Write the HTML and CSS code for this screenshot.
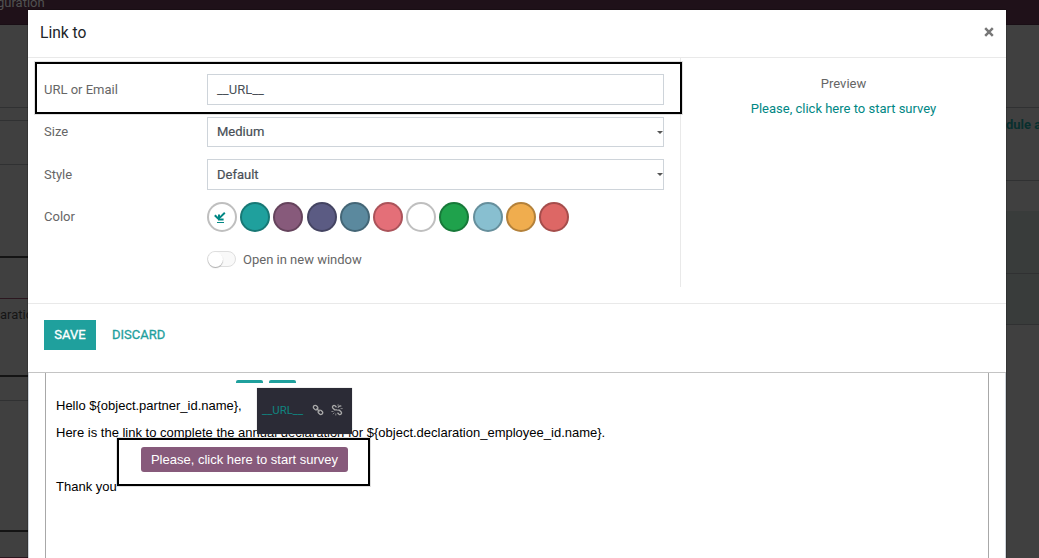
FILE: index.html
```html
<!DOCTYPE html>
<html lang="en">
<head>
<meta charset="utf-8">
<title>Link to</title>
<link rel="stylesheet" href="styles.css">
</head>
<body>
<header class="navbar">guration</header>
<main class="backdrop">
  <div class="strip">
    <div class="seg s83"></div><div class="seg s13"></div><div class="seg s44"></div>
    <div class="seg thick s93"></div><div class="seg red s41"></div>
    <div class="seg thick s78 cell">aration</div><div class="seg s24"></div>
    <div class="seg thick s131"></div><div class="seg red s26"></div>
  </div>
  <div class="strip right">
    <div class="seg s83"></div><div class="seg schedule">dule a</div>
    <div class="seg plain s30"></div><div class="seg tint s63"></div><div class="seg tint s51"></div>
  </div>
</main>
<div class="workspace">
  <section class="modal">
    <div class="modal-header"><h1>Link to</h1>
      <button class="close" aria-label="Close"><svg width="10" height="10" viewBox="0 0 10 10"><path d="M1.2 1.2 8.8 8.8M8.8 1.2 1.2 8.8"/></svg></button>
    </div>
    <div class="modal-body">
      <form class="fields">
        <div class="field"><label>URL or Email</label><div class="control url">__URL__</div></div>
        <div class="field size"><label>Size</label><div class="control select">Medium<svg class="caret" width="6" height="3" viewBox="0 0 6 3"><path d="M0 0h6L3 3z"/></svg></div></div>
        <div class="field style"><label>Style</label><div class="control select">Default<svg class="caret" width="6" height="3" viewBox="0 0 6 3"><path d="M0 0h6L3 3z"/></svg></div></div>
        <div class="field colors"><label>Color</label>
          <div class="swatches">
            <span class="swatch white"><svg width="12" height="13" viewBox="0 0 12 13"><path class="arrow" d="M10.8 1.8 5.8 6.6M.8 4.2 4.4 7.8M5 3.6V8.5H9.6"/><path class="line" d="M3 11.5h7"/></svg></span>
            <span class="swatch teal"></span><span class="swatch purple"></span><span class="swatch indigo"></span><span class="swatch steel"></span><span class="swatch pink"></span><span class="swatch white"></span><span class="swatch green"></span><span class="swatch sky"></span><span class="swatch orange"></span><span class="swatch red-color"></span>
          </div>
        </div>
        <div class="toggle-row"><span class="toggle"></span><span class="toggle-label">Open in new window</span></div>
      </form>
      <aside class="preview"><div>Preview</div><a>Please, click here to start survey</a></aside>
    </div>
    <footer class="modal-footer"><button class="save">SAVE</button><button class="discard">DISCARD</button></footer>
  </section>
  <section class="editor">
    <div class="editor-frame">
      <div class="tabs"><i></i><i></i></div>
      <p>Hello ${object.partner_id.name},</p>
      <p>Here is the link to complete the annual declaration for ${object.declaration_employee_id.name}.</p>
      <a class="survey">Please, click here to start survey</a>
      <p>Thank you</p>
    </div>
  </section>
</div>
<div class="link-popover"><span>__URL__</span>
  <svg class="chain" width="12" height="12" viewBox="0 0 12 12"><rect x="1.2" y="1.8" width="4.8" height="3.6" rx="1.7" transform="rotate(45 3.6 3.6)"/><rect x="6" y="6.5" width="4.8" height="3.6" rx="1.7" transform="rotate(45 8.4 8.3)"/><path d="m4.5 4.5 3 3"/></svg>
  <svg class="unlink" width="12" height="12" viewBox="0 0 12 12"><path d="M5.5 3.3 4 1.8Q2.9 1 1.9 2T1.8 4L3.6 5.8H6M6.5 8.7 8 10.2Q9.1 11 10.1 10T10.2 8L8.4 6.2H6.2M6.8 3.6 8 2.4Q9.3 1.3 10.3 2.4"/><path class="rays" d="M7.1.2v1.8M9.5 4.6h2.2M.4 7.5h2.1M3.4 8.7 1.9 10.2M4.8 9.5v2"/></svg>
</div>
<div class="highlight url-highlight"></div>
<div class="highlight survey-highlight"></div>
</body>
</html>
```
FILE: styles.css
```css
* { box-sizing: border-box; }
body { margin: 0; width: 1039px; height: 558px; overflow: hidden; position: relative; font: 13px/18px Roboto, sans-serif; color: #666; background: #404040; }
button { font: inherit; border: 0; margin: 0; padding: 0; background: none; }
.navbar { height: 25px; background: #1f1119; border-bottom: 1px solid #190e15; color: #515151; line-height: 5px; text-indent: -3px; overflow: hidden; }
.backdrop { display: flex; justify-content: space-between; height: 533px; }
.strip { width: 28px; overflow: hidden; color: #151515; }
.strip.right { width: 33px; }
.seg { border-bottom: 1px solid #303132; white-space: nowrap; }
.seg.thick { border-bottom: 2px solid #141414; }
.seg.red { border-bottom-color: #2b171f; }
.seg.plain { border: 0; }
.seg.tint { background: #393c3b; }
.s83 { height: 83px; } .s13 { height: 13px; } .s44 { height: 44px; } .s93 { height: 93px; } .s41 { height: 41px; } .s78 { height: 78px; } .s24 { height: 24px; } .s131 { height: 131px; } .s26 { height: 26px; } .s30 { height: 30px; } .s63 { height: 63px; } .s51 { height: 51px; }
.cell { padding-top: 7px; }
.schedule { height: 73px; padding-top: 8px; color: #082f2e; font-weight: 700; }
.workspace { position: absolute; left: 28px; top: 10px; width: 978px; height: 548px; display: flex; flex-direction: column; background: #fff; box-shadow: 0 0 1px #000; }
.modal { height: 363px; border-bottom: 1px solid #c4c4c4; display: flex; flex-direction: column; }
.modal-header { height: 48px; padding: 0 12px; border-bottom: 1px solid #e9e9e9; display: flex; justify-content: space-between; align-items: center; }
.modal-header h1 { margin: 0 0 1px; font-size: 15.6px; line-height: 20px; font-weight: 400; color: #212529; }
.close { height: 10px; margin-bottom: 4px; display: flex; }
.close path { stroke: #777; stroke-width: 2.5; }
.modal-body { height: 246px; border-bottom: 1px solid #e9e9e9; padding-left: 16px; display: flex; }
.fields { width: 637px; height: 229px; padding-top: 16px; border-right: 1px solid #e9e9e9; }
.field { display: flex; align-items: center; height: 31px; }
.field label { width: 163px; }
.field.size { height: 30px; margin-top: 12px; }
.field.style { margin-top: 12px; }
.field.colors { height: 30px; margin-top: 12px; }
.control { width: 457px; height: 100%; border: 1px solid #ced4da; padding: 0 0 0 9px; display: flex; align-items: center; justify-content: space-between; color: #495057; }
.select { -webkit-text-stroke: .2px #495057; }
.caret { fill: #555; }
.swatches { display: flex; gap: 3.2px; }
.swatch { width: 30px; height: 30px; flex: none; border: 2px solid rgba(0,0,0,.25); border-radius: 50%; display: flex; align-items: center; justify-content: center; }
.white { background: #fff; } .teal { background: #1fa09d; } .purple { background: #875a7b; } .indigo { background: #5b5b83; } .steel { background: #5b899e; } .pink { background: #e46f78; } .green { background: #1fa24c; } .sky { background: #88bfd0; } .orange { background: #f0ad4e; } .red-color { background: #dd6765; }
.swatch svg { fill: none; stroke: #008784; margin: 0 4px 0 0; }
.arrow { stroke-width: 2; } .line { stroke-width: 1; }
.toggle-row { display: flex; align-items: center; gap: 7px; margin: 18px 0 0 163px; }
.toggle-label { padding-top: 1px; margin-bottom: -1px; }
.toggle { width: 29px; height: 16px; border: 1px solid #dedede; background: #f9f9f9; border-radius: 8px; }
.toggle::before { content: ""; display: block; width: 15px; height: 15px; background: #fff; border-radius: 50%; box-shadow: 0 1px 1px #aaa; }
.preview { flex: 1; padding: 16px 0 0; text-align: center; line-height: 20px; }
.preview a { display: block; margin-top: 5px; color: #008784; }
.modal-footer { height: 68px; padding: 16px; display: flex; gap: 16px; align-items: flex-start; }
.modal-footer button { height: 30px; }
.modal-footer .save { width: 52px; color: #fff; background: #1fa09d; -webkit-text-stroke: .3px #fff; }
.modal-footer .discard { color: #1fa09d; -webkit-text-stroke: .3px #1fa09d; }
.editor { flex: 1; border: solid #ced4da; border-width: 0 1px; padding: 0 16px; font-family: "Liberation Sans", Arial, sans-serif; color: #000; }
.editor-frame { height: 100%; border: solid #a8a8a8; border-width: 0 1px; padding: 7px 10px 0; }
.editor p { margin: 0 0 9px; }
.tabs { display: flex; gap: 6px; height: 3px; margin: 0 0 14px 180px; }
.tabs i { width: 27px; height: 3px; background: #1fa09d; border-radius: 2px 2px 0 0; }
.survey { display: block; width: 207px; height: 25px; margin: -4px 0 6px 85px; line-height: 25px; text-align: center; color: #fff; background: #875a7b; border-radius: 3px; }
.link-popover { position: absolute; left: 257px; top: 388px; width: 95px; height: 46px; background: #2b2b36; padding-left: 5px; display: flex; align-items: center; color: #108480; font-size: 11.4px; line-height: 16px; box-shadow: 0 0 1px #aaa; }
.link-popover span { width: 50px; margin-top: -2px; }
.link-popover svg { fill: none; stroke: #aaa; stroke-width: 1.3; margin-top: -2px; }
.link-popover .unlink { margin-left: 7px; }
.link-popover .rays { stroke-width: .7; }
.highlight { position: absolute; border: 2px solid #000; box-shadow: 0 0 0 1px rgba(0,0,0,.12); }
.url-highlight { left: 35px; top: 62px; width: 647px; height: 52px; }
.survey-highlight { left: 117px; top: 438px; width: 253px; height: 48px; }
```
